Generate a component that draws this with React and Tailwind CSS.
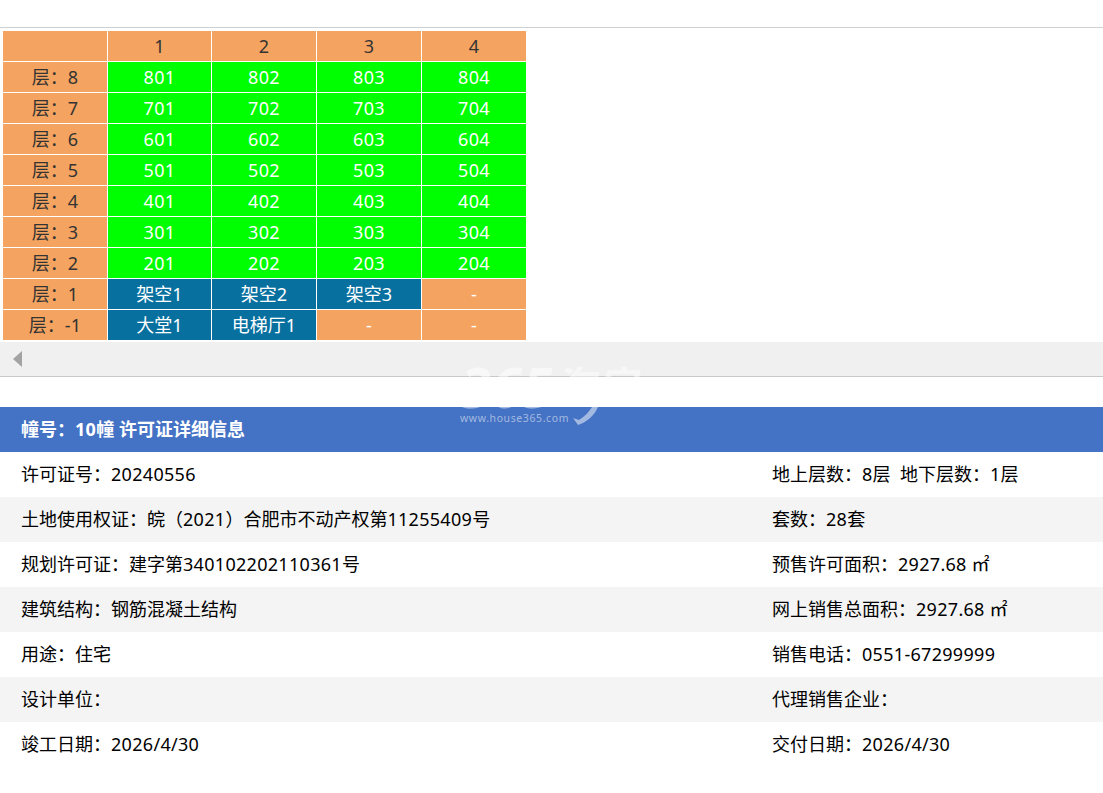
const floors = [
  ["层\uff1a8", "801", "802", "803", "804"],
  ["层\uff1a7", "701", "702", "703", "704"],
  ["层\uff1a6", "601", "602", "603", "604"],
  ["层\uff1a5", "501", "502", "503", "504"],
  ["层\uff1a4", "401", "402", "403", "404"],
  ["层\uff1a3", "301", "302", "303", "304"],
  ["层\uff1a2", "201", "202", "203", "204"],
  ["层\uff1a1", "架空1", "架空2", "架空3", "-"],
  ["层\uff1a-1", "大堂1", "电梯厅1", "-", "-"],
];

const info = [
  ["许可证号\uff1a20240556", "地上层数\uff1a8层\u00a0\u00a0地下层数\uff1a1层"],
  ["土地使用权证\uff1a皖\uff082021\uff09合肥市不动产权第11255409号", "套数\uff1a28套"],
  ["规划许可证\uff1a建字第340102202110361号", "预售许可面积\uff1a2927.68 ㎡"],
  ["建筑结构\uff1a钢筋混凝土结构", "网上销售总面积\uff1a2927.68 ㎡"],
  ["用途\uff1a住宅", "销售电话\uff1a0551-67299999"],
  ["设计单位\uff1a", "代理销售企业\uff1a"],
  ["竣工日期\uff1a2026/4/30", "交付日期\uff1a2026/4/30"],
];

const title = "幢号\uff1a10幢 许可证详细信息";

const fontStack = { fontFamily: '"Noto Sans", "Noto Sans CJK SC", sans-serif' };

// digits run a touch narrower in Noto Sans than in the reference
function Wide({ text }) {
  return text.split(/([\d./-]+)/).map((part, i) =>
    i % 2 === 1 ? <span key={i} className="tracking-[0.3px]">{part}</span> : part
  );
}

function Cell({ value }) {
  let color = "bg-[#00ff00] text-white";
  if (value === "-") color = "bg-[#f4a460] text-white";
  else if (/[^\d]/.test(value)) color = "bg-[#07709f] text-white";
  return <td className={`h-[30px] p-0 text-center ${color}`}><Wide text={value} /></td>;
}

export default function App() {
  return (
    <div className="relative h-[793px] overflow-hidden bg-white text-[18px] leading-[30px]" style={fontStack}>
      {/* top bar */}
      <div className="h-[28px] border-b border-[#d0d0d0]" />

      {/* floor table */}
      <div className="pt-[2px] pb-[1px] pl-[2px]">
        <table className="w-[525px] table-fixed border-separate border-spacing-[1px]">
          <tbody>
            <tr>
              <td className="h-[30px] w-[104px] bg-[#f4a460] p-0" />
              <td className="h-[30px] w-[103px] bg-[#f4a460] p-0 text-center text-[#333]">1</td>
              <td className="h-[30px] w-[104px] bg-[#f4a460] p-0 text-center text-[#333]">2</td>
              <td className="h-[30px] w-[104px] bg-[#f4a460] p-0 text-center text-[#333]">3</td>
              <td className="h-[30px] w-[104px] bg-[#f4a460] p-0 text-center text-[#333]">4</td>
            </tr>
            {floors.map((row) => (
              <tr key={row[0]}>
                <td className="h-[30px] bg-[#f4a460] p-0 text-center text-[#333]"><Wide text={row[0]} /></td>
                {row.slice(1).map((v, i) => (
                  <Cell key={i} value={v} />
                ))}
              </tr>
            ))}
          </tbody>
        </table>
      </div>

      {/* scrollbar */}
      <div className="flex h-[35px] items-center border-b border-[#c8c8c8] bg-[#f0f0f0] pl-[13px]">
        <div className="h-0 w-0 border-y-[8px] border-r-[9px] border-y-transparent border-r-[#a3a3a3]" />
      </div>

      {/* detail */}
      <div className="mt-[30px]">
        <div className="flex h-[45px] items-center bg-[#4472c4] pb-[1px] pl-[21px] font-bold text-white">
          <span><Wide text={title} /></span>
        </div>
        {info.map(([left, right], i) => (
          <div key={left} className={`flex h-[45px] items-center pb-[2px] text-black ${i % 2 === 1 ? "bg-[#f4f4f4]" : "bg-white"}`}>
            <div className="w-[772px] pl-[21px]"><Wide text={left} /></div>
            <div className="flex-1"><Wide text={right} /></div>
          </div>
        ))}
      </div>

      {/* watermark */}
      <div className="pointer-events-none absolute top-[361px] left-[460px] w-[190px] text-white/50">
        <div className="flex h-[50px] items-end font-bold italic">
          <span className="text-[56px] leading-[50px]">365</span>
          <span className="text-[42px] leading-[50px]">淘房</span>
        </div>
        <div className="mt-[1px] text-[10.5px] leading-[12px] tracking-[0.6px]">www.house365.com</div>
        <svg className="absolute top-[44px] left-[110px] h-[20px] w-[32px]" viewBox="0 0 32 20">
          <path d="M3 13 L9 15 C15 11 19 7 22 2 L28 2 C24 11 17 17 8 20 Z" fill="currentColor" />
        </svg>
      </div>
    </div>
  );
}
